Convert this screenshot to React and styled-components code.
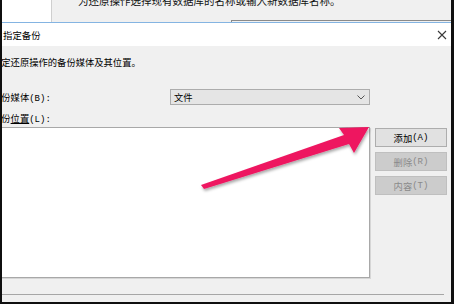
import React from 'react';
import styled, { createGlobalStyle } from 'styled-components';

const GlobalStyle = createGlobalStyle`
  html, body {
    margin: 0;
    padding: 0;
    background: #0f0f0f;
  }
  body {
    font-family: "Noto Sans CJK SC", "Noto Sans", sans-serif;
  }
`;

const Frame = styled.div`
  position: relative;
  width: 454px;
  height: 304px;
  box-sizing: border-box;
  padding: 0 3px 2px 2px;
  background: #0f0f0f;
  overflow: hidden;
`;

const Screen = styled.div`
  display: flex;
  flex-direction: column;
  height: 100%;
  overflow: hidden;
  background: #f0f0f0;
`;

const BackWindow = styled.div`
  display: flex;
  height: 22px;
  flex-shrink: 0;
  overflow: hidden;
`;

const SidePanel = styled.div`
  width: 49px;
  background: #ffffff;
  border-right: 1px solid #cfcfcf;
`;

const BackArea = styled.div`
  flex: 1;
  display: flex;
  flex-direction: column;
  background: #f0f0f0;
`;

const BackText = styled.div`
  margin-top: -5px;
  padding-left: 26px;
  font-size: 10.5px;
  line-height: 12px;
  color: #111;
  white-space: nowrap;
`;

const BackInput = styled.div`
  margin: auto 0 0 179px;
  height: 1px;
  border-top: 1px solid #8a8a8a;
  border-left: 1px solid #8a8a8a;
`;

const Dialog = styled.div`
  flex: 1;
  display: flex;
  flex-direction: column;
  border-top: 1px solid #84b4e2;
`;

const TitleBar = styled.div`
  display: flex;
  align-items: center;
  justify-content: space-between;
  height: 23px;
  padding: 0 4px 0 1px;
  background: #ffffff;
  font-size: 9.4px;
  color: #000;
`;

const CloseIcon = () => (
  <svg width="10" height="10" viewBox="0 0 10 10">
    <path d="M1 1 L9 9 M9 1 L1 9" stroke="#3a3a3a" strokeWidth="1.1" fill="none" />
  </svg>
);

const Body = styled.div`
  flex: 1;
  overflow: hidden;
  background: #f0f0f0;
`;

const Content = styled.div`
  margin-left: -10px;
  padding-top: 10px;
  display: flex;
  flex-direction: column;
  font-size: 9.3px;
  color: #000;
`;

const Text = styled.div`
  line-height: 12px;
  height: 12px;
  white-space: nowrap;
  margin-top: ${p => p.$top || 0}px;
`;

const Key = styled.span`
  font-family: "Liberation Mono", monospace;
  font-size: 9px;
`;

const Marked = styled.span`
  text-decoration: underline;
`;

const MediaRow = styled.div`
  display: grid;
  grid-template-columns: 178px 200px;
  align-items: center;
  margin-top: 21px;
  height: 16px;
`;

const Select = styled.div`
  display: flex;
  align-items: center;
  justify-content: space-between;
  box-sizing: border-box;
  height: 16px;
  padding: 0 4px 0 3px;
  background: #e5e5e5;
  border: 1px solid #acacac;
`;

const Chevron = () => (
  <svg width="8" height="5" viewBox="0 0 8 5">
    <path d="M0.5 0.5 L4 4 L7.5 0.5" stroke="#555" strokeWidth="1" fill="none" />
  </svg>
);

const ListRow = styled.div`
  display: grid;
  grid-template-columns: 378px 72px;
  column-gap: 5px;
  margin-top: 3px;
`;

const ListBox = styled.div`
  height: 151px;
  box-sizing: border-box;
  background: #ffffff;
  border: 1px solid #a8a8a8;
  box-shadow: 1px 1px 0 #d6d6d6;
`;

const ButtonColumn = styled.div`
  display: flex;
  flex-direction: column;
  gap: 5px;
  padding-top: 1px;
`;

const Button = styled.div`
  height: 19px;
  box-sizing: border-box;
  display: flex;
  align-items: center;
  justify-content: center;
  background: ${p => (p.$disabled ? '#cccccc' : '#e1e1e1')};
  border: 1px solid ${p => (p.$disabled ? '#bfbfbf' : '#adadad')};
  color: ${p => (p.$disabled ? '#8a8a8a' : '#000')};
  font-size: 9.3px;
`;

const Separator = styled.div`
  margin-top: 16px;
  width: 452px;
  height: 1px;
  background: #a6a6a6;
`;

const ArrowLayer = styled.svg`
  position: absolute;
  left: 0;
  top: 0;
  pointer-events: none;
`;

export default function App() {
  return (
    <>
      <GlobalStyle />
      <Frame>
        <Screen>
          <BackWindow>
            <SidePanel />
            <BackArea>
              <BackText>为还原操作选择现有数据库的名称或输入新数据库名称。</BackText>
              <BackInput />
            </BackArea>
          </BackWindow>
          <Dialog>
            <TitleBar>
              <span>指定备份</span>
              <CloseIcon />
            </TitleBar>
            <Body>
              <Content>
                <Text>指定还原操作的备份媒体及其位置。</Text>
                <MediaRow>
                  <Text>备份媒体<Key>(B):</Key></Text>
                  <Select>
                    <span>文件</span>
                    <Chevron />
                  </Select>
                </MediaRow>
                <Text $top={7}>备份<Marked>位置</Marked><Key>(L):</Key></Text>
                <ListRow>
                  <ListBox />
                  <ButtonColumn>
                    <Button>添加<Key>(A)</Key></Button>
                    <Button $disabled>删除<Key>(R)</Key></Button>
                    <Button $disabled>内容<Key>(T)</Key></Button>
                  </ButtonColumn>
                </ListRow>
                <Separator />
              </Content>
            </Body>
          </Dialog>
        </Screen>
        <ArrowLayer width="454" height="304" viewBox="0 0 454 304">
          <defs>
            <filter id="shade" x="-10%" y="-20%" width="130%" height="160%">
              <feDropShadow dx="1" dy="2" stdDeviation="1.5" floodColor="#000" floodOpacity="0.35" />
            </filter>
          </defs>
          <polygon
            points="201,185 344,135 339,128 369,127 354,153 349,144 204,189"
            fill="#ee1560"
            filter="url(#shade)"
          />
        </ArrowLayer>
      </Frame>
    </>
  );
}
